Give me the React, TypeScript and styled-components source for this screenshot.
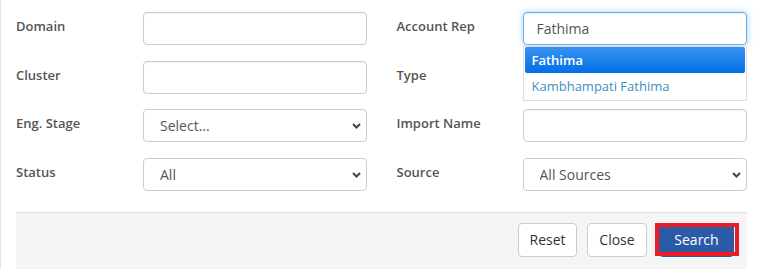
import React, { useState } from 'react';
import styled, { createGlobalStyle } from 'styled-components';

const GlobalStyle = createGlobalStyle`
  html, body {
    margin: 0;
    padding: 0;
    background: #ffffff;
  }
  body {
    font-family: 'Open Sans', 'Noto Sans', sans-serif;
    width: 759px;
    height: 269px;
    overflow: hidden;
  }
`;

const suggestions = ['Fathima', 'Kambhampati Fathima'];

export default function App() {
  const [rep, setRep] = useState('Fathima');
  const [activeIndex] = useState(0);

  return (
    <>
      <GlobalStyle />
      <Panel>
        <Form>
          <Column>
            <Row>
              <Label>Domain</Label>
              <TextInput type='text' />
            </Row>
            <Row>
              <Label>Cluster</Label>
              <TextInput type='text' />
            </Row>
            <Row>
              <Label>Eng. Stage</Label>
              <Dropdown options={['Select...']} />
            </Row>
            <Row>
              <Label>Status</Label>
              <Dropdown options={['All']} />
            </Row>
          </Column>
          <Column>
            <Row>
              <Label $narrow>Account Rep</Label>
              <AutoComplete>
                <TextInput
                  type='text'
                  $focused
                  value={rep}
                  onChange={(e) => setRep(e.target.value)}
                />
                <SuggestList>
                  {suggestions.map((s, i) => (
                    <SuggestItem key={s} $active={i === activeIndex}>
                      {s}
                    </SuggestItem>
                  ))}
                </SuggestList>
              </AutoComplete>
            </Row>
            <Row>
              <Label $narrow>Type</Label>
              <TextInput type='text' />
            </Row>
            <Row>
              <Label $narrow>Import Name</Label>
              <TextInput type='text' />
            </Row>
            <Row>
              <Label $narrow>Source</Label>
              <Dropdown options={['All Sources']} />
            </Row>
          </Column>
        </Form>
        <Footer>
          <Button $width={59}>Reset</Button>
          <Button $width={60}>Close</Button>
          <Highlight>
            <Button $primary $width={75}>
              Search
            </Button>
          </Highlight>
        </Footer>
      </Panel>
    </>
  );
}

function Dropdown({ options }: { options: string[] }) {
  return (
    <SelectWrap>
      <Select>
        {options.map((o) => (
          <option key={o}>{o}</option>
        ))}
      </Select>
      <Chevron width='9' height='6' viewBox='0 0 9 6'>
        <path d='M1 1 L4.5 4.5 L8 1' fill='none' stroke='#444' strokeWidth='2' />
      </Chevron>
    </SelectWrap>
  );
}

const Panel = styled.div`
  border-left: 1px solid #e6e6e6;
  height: 269px;
  box-sizing: border-box;
  padding: 12px 12px 0 15px;
  display: flex;
  flex-direction: column;
`;

const Form = styled.div`
  display: flex;
  gap: 30px;
`;

const Column = styled.div`
  flex: 1;
  display: flex;
  flex-direction: column;
  gap: 15.5px;
`;

const Row = styled.div`
  display: flex;
  align-items: flex-start;
`;

const Label = styled.label<{ $narrow?: boolean }>`
  width: ${(p) => (p.$narrow ? '126px' : '127px')};
  flex-shrink: 0;
  padding-top: 4px;
  line-height: 20px;
  font-size: 13px;
  font-weight: 600;
  color: #555555;
`;

const TextInput = styled.input<{ $focused?: boolean }>`
  box-sizing: border-box;
  width: 100%;
  height: 33px;
  padding: 0 13px;
  font-family: inherit;
  font-size: 14px;
  color: #555555;
  background: #ffffff;
  border: 1px solid ${(p) => (p.$focused ? '#66afe9' : '#cccccc')};
  border-radius: 4px;
  box-shadow: ${(p) =>
    p.$focused
      ? 'inset 0 1px 1px rgba(0,0,0,.075), 0 0 6px rgba(102,175,233,.6)'
      : 'inset 0 1px 1px rgba(0,0,0,.05)'};
  outline: none;
`;

const AutoComplete = styled.div`
  position: relative;
  flex: 1;
`;

const SuggestList = styled.ul`
  position: absolute;
  top: 34px;
  left: 0;
  right: 0;
  margin: 0;
  padding: 0 1px 1px;
  list-style: none;
  background: #ffffff;
  border: 1px solid #dddddd;
  z-index: 2;
`;

const SuggestItem = styled.li<{ $active?: boolean }>`
  height: 26px;
  line-height: 26px;
  padding-left: 7px;
  font-size: 13px;
  font-weight: ${(p) => (p.$active ? 600 : 400)};
  color: ${(p) => (p.$active ? '#ffffff' : '#3f8fc4')};
  background: ${(p) =>
    p.$active ? 'linear-gradient(#3a92f0, #0070e4)' : 'transparent'};
  border-radius: ${(p) => (p.$active ? '2px' : '0')};
`;

const SelectWrap = styled.div`
  position: relative;
  flex: 1;
`;

const Select = styled.select`
  box-sizing: border-box;
  width: 100%;
  height: 33px;
  padding: 0 24px 0 16px;
  font-family: inherit;
  font-size: 14px;
  color: #555555;
  background: #ffffff;
  border: 1px solid #cccccc;
  border-radius: 4px;
  appearance: none;
  outline: none;
`;

const Chevron = styled.svg`
  position: absolute;
  right: 6px;
  top: 14px;
  pointer-events: none;
`;

const Footer = styled.div`
  margin-top: 21px;
  flex: 1;
  display: flex;
  justify-content: flex-end;
  align-items: flex-start;
  gap: 10px;
  padding: 10px 13px 0 0;
  background: #f5f5f5;
  border-top: 1px solid #dfdfdf;
`;

const Button = styled.button<{ $primary?: boolean; $width: number }>`
  box-sizing: border-box;
  width: ${(p) => p.$width}px;
  height: 34px;
  padding: 0;
  font-family: inherit;
  font-size: 14px;
  color: ${(p) => (p.$primary ? '#ffffff' : '#333333')};
  background: ${(p) => (p.$primary ? '#2b5aa7' : '#ffffff')};
  border: 1px solid ${(p) => (p.$primary ? '#2b5aa7' : '#cccccc')};
  border-radius: 4px;
  cursor: pointer;
`;

const Highlight = styled.span`
  position: relative;
  display: inline-flex;
  margin-left: 2px;

  &::after {
    content: '';
    position: absolute;
    left: -4px;
    right: -5px;
    top: 0;
    bottom: 1px;
    border: 4px solid #ed1c24;
    pointer-events: none;
  }
`;
